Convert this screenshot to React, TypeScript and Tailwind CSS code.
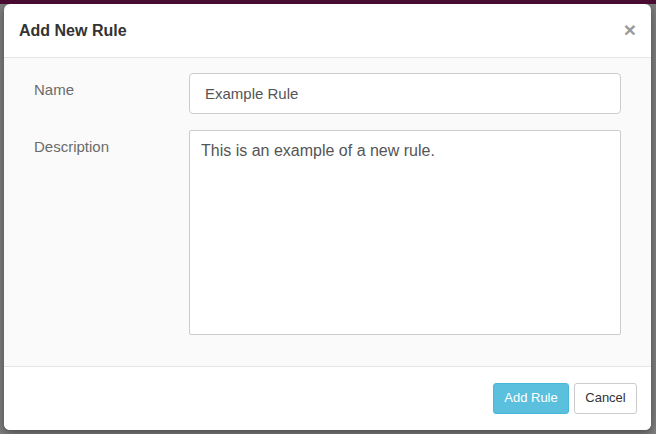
import React from 'react'

export default function App() {
  return (
    <div
      className="w-[656px] h-[434px] overflow-hidden bg-[#7d7d7d] flex flex-col"
      style={{ fontFamily: '"Liberation Sans", Arial, sans-serif' }}
    >
      {/* page behind the backdrop */}
      <div className="h-[4px] bg-[#4b0c34] shrink-0" />
      <div className="flex flex-1 pl-[4px] pr-[5px] pb-[4px]">
        {/* Modal */}
        <div className="flex-1 flex flex-col bg-white rounded-[6px] overflow-hidden shadow-[0_3px_9px_rgba(0,0,0,0.4)]">
          {/* Header */}
          <div className="h-[54px] shrink-0 flex items-center justify-between pl-[15px] pr-[15px] border-b border-[#e5e5e5]">
            <h4 className="text-[16px] font-bold text-[#333] leading-none pt-[1px]">Add New Rule</h4>
            <button className="text-[21px] font-bold leading-none text-[#9a9a9a] pb-[2px]">×</button>
          </div>

          {/* Body */}
          <div className="flex-1 bg-[#fafafa] pl-[30px] pr-[30px] pt-[15px] flex flex-col gap-[16px]">
            <div className="flex">
              <label className="w-[155px] shrink-0 pt-[7px] text-[15px] leading-[20px] text-[#6b6b6b]">Name</label>
              <input
                readOnly
                value="Example Rule"
                className="flex-1 h-[41px] rounded-[4px] border border-[#ccc] bg-white pl-[15px] text-[15px] text-[#555] outline-none"
              />
            </div>
            <div className="flex">
              <label className="w-[155px] shrink-0 pt-[7px] text-[15px] leading-[20px] text-[#6b6b6b]">Description</label>
              <textarea
                readOnly
                value="This is an example of a new rule."
                className="flex-1 h-[205px] resize-none rounded-[2px] border border-[#ccc] bg-white px-[11px] pt-[9px] text-[16px] leading-[22px] text-[#555] outline-none"
              />
            </div>
          </div>

          {/* Footer */}
          <div className="h-[64px] shrink-0 border-t border-[#e5e5e5] bg-white flex items-center justify-end gap-[5px] pr-[14px] pb-[1px]">
            <button className="w-[76px] h-[31px] rounded-[3px] bg-[#5bc0de] border border-[#46b8da] text-white text-[13px]">
              Add Rule
            </button>
            <button className="w-[63px] h-[31px] rounded-[3px] bg-white border border-[#ccc] text-[#333] text-[13px]">
              Cancel
            </button>
          </div>
        </div>
      </div>
    </div>
  )
}
